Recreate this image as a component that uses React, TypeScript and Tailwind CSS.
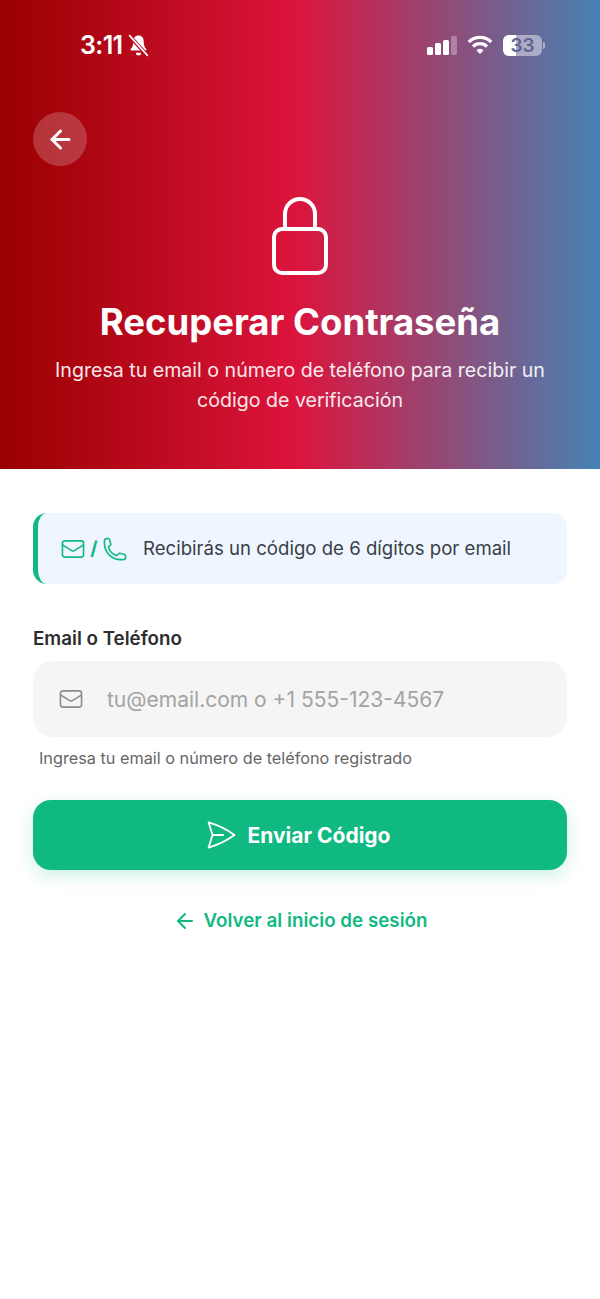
import React from 'react';
import { ArrowLeft } from 'lucide-react';

const MAIL_PATH =
  'M21.75 6.75v10.5a2.25 2.25 0 0 1-2.25 2.25h-15a2.25 2.25 0 0 1-2.25-2.25V6.75m19.5 0A2.25 2.25 0 0 0 19.5 4.5h-15a2.25 2.25 0 0 0-2.25 2.25m19.5 0v.243a2.25 2.25 0 0 1-1.07 1.916l-7.5 4.615a2.25 2.25 0 0 1-2.36 0L3.32 8.91a2.25 2.25 0 0 1-1.07-1.916V6.75';
const PHONE_PATH =
  'M2.25 6.75c0 8.284 6.716 15 15 15h2.25a2.25 2.25 0 0 0 2.25-2.25v-1.372c0-.516-.351-.966-.852-1.091l-4.423-1.106c-.44-.11-.902.055-1.173.417l-.97 1.293c-.282.376-.769.542-1.21.38a12.035 12.035 0 0 1-7.143-7.143c-.162-.441.004-.928.38-1.21l1.293-.97c.363-.271.527-.734.417-1.173L6.963 3.102a1.125 1.125 0 0 0-1.091-.852H4.5A2.25 2.25 0 0 0 2.25 4.5v2.25Z';
const SEND_PATH =
  'M6 12 3.269 3.125A59.769 59.769 0 0 1 21.485 12 59.768 59.768 0 0 1 3.27 20.875L5.999 12Zm0 0h7.5';

function OutlineIcon({ d, className, strokeWidth = 1.5 }: { d: string; className: string; strokeWidth?: number }) {
  return (
    <svg viewBox="0 0 24 24" fill="none" stroke="currentColor" strokeWidth={strokeWidth} strokeLinecap="round" strokeLinejoin="round" className={className}>
      <path d={d} />
    </svg>
  );
}

function StatusBar() {
  return (
    <div className="h-[28px] flex items-center justify-between pl-[80px] pr-[55px] text-white">
      <div className="flex items-center gap-[5px]">
        <span className="text-[25px] leading-none font-semibold tracking-tight">3:11</span>
        {/* Muted bell */}
        <svg viewBox="0 0 20 22" className="w-[21px] h-[23px]" fill="white">
          <path d="M10 1.500c-3.200 0-5 2.600-5 5.600 0 3.600-.9 5.800-2.400 7.300-.5.6-.2 1.400.6 1.400h13.600c.8 0 1.100-.8.6-1.400-1.500-1.500-2.400-3.700-2.400-7.300 0-3-1.800-5.600-5-5.600Z" />
          <path d="M7.500 18h5a2.500 2.500 0 0 1-5 0Z" />
          <path d="M2 2.500 18 20" stroke="#bb0c29" strokeWidth="3.600" />
          <path d="M1.500 1.500 18.500 20.500" stroke="white" strokeWidth="1.600" strokeLinecap="round" />
        </svg>
      </div>
      <div className="flex items-center gap-[10px]">
        {/* Signal */}
        <div className="flex items-end gap-[2px] h-[19px]">
          <div className="w-[6px] h-[8px] rounded-[1.5px] bg-white" />
          <div className="w-[6px] h-[12px] rounded-[1.5px] bg-white" />
          <div className="w-[6px] h-[15px] rounded-[1.5px] bg-white" />
          <div className="w-[6px] h-[19px] rounded-[1.5px] bg-white/30" />
        </div>
        {/* Wifi */}
        <svg viewBox="0 0 26 20" className="w-[26px] h-[20px]" fill="none" stroke="white" strokeWidth="3.200">
          <path d="M1.800 7a16 16 0 0 1 22.400 0" />
          <path d="M6 11.500a10 10 0 0 1 14 0" />
          <path d="M13 19l-3.600-3.800a5 5 0 0 1 7.200 0L13 19Z" fill="white" stroke="none" />
        </svg>
        {/* Battery */}
        <div className="flex items-center gap-[1px]">
          <div className="relative w-[39px] h-[21px] rounded-[6px] bg-white/45 overflow-hidden flex items-center justify-center">
            <div className="absolute inset-y-0 left-0 w-[13px] bg-white" />
            <span className="relative text-[19px] leading-none font-semibold text-[#5b6690]">33</span>
          </div>
          <div className="w-[2px] h-[7px] rounded-r-full bg-white/50" />
        </div>
      </div>
    </div>
  );
}

export default function App() {
  return (
    <div className="min-h-[1299px] bg-white font-['Inter',sans-serif]">
      {/* Header */}
      <div className="h-[469px] pt-[31px] flex flex-col bg-[linear-gradient(90deg,#990000_0%,#dc143c_49%,#4682b4_100%)]">
        <StatusBar />

        <button className="mt-[53px] ml-[33px] w-[54px] h-[54px] rounded-full bg-white/20 flex items-center justify-center text-white">
          <ArrowLeft className="w-[29px] h-[29px]" strokeWidth={2.5} />
        </button>

        <div className="flex flex-col items-center text-white">
          <svg viewBox="0 0 60 78" className="mt-[31px] w-[60px] h-[78px]" fill="none" stroke="white" strokeWidth="4">
            <rect x="4" y="32" width="52" height="44" rx="8" />
            <path d="M15 32V17a15 15 0 0 1 30 0v15" />
          </svg>
          <h1 className="mt-[23px] text-[36.5px] leading-[48px] font-bold">Recuperar Contraseña</h1>
          <p className="mt-[9px] w-[520px] text-center text-[19.6px] leading-[30px] text-white/90">
            Ingresa tu email o número de teléfono para recibir un código de verificación
          </p>
        </div>
      </div>

      {/* Form */}
      <div className="px-[33px] pt-[44px]">
        <div className="h-[71px] rounded-[14px] border-l-[5px] border-[#10b981] bg-[#eff6ff] flex items-center pl-[22px]">
          <div className="flex items-center text-[#10b981]">
            <OutlineIcon d={MAIL_PATH} className="w-[26px] h-[26px]" />
            <span className="ml-[4px] mr-[4px] w-[8px] text-center text-[19px] leading-none font-bold">/</span>
            <OutlineIcon d={PHONE_PATH} className="w-[26px] h-[26px]" />
          </div>
          <span className="ml-[15px] pt-[1px] text-[18.6px] text-[#3a3f47]">Recibirás un código de 6 dígitos por email</span>
        </div>

        <label className="block mt-[43px] text-[18.75px] leading-[24px] font-semibold text-[#2d2d2d]">Email o Teléfono</label>
        <div className="mt-[10px] h-[76px] rounded-[20px] bg-[#f5f5f5] flex items-center pl-[25px]">
          <OutlineIcon d={MAIL_PATH} className="w-[26px] h-[26px] text-[#8c8c8c]" />
          <span className="ml-[23px] pt-[1px] text-[21px] text-[#a3a3a3]">tu@email.com o +1 555-123-4567</span>
        </div>
        <p className="mt-[10px] ml-[6px] text-[16.25px] leading-[22px] text-[#666666]">Ingresa tu email o número de teléfono registrado</p>

        <button className="mt-[31px] w-full h-[70px] rounded-[18px] bg-[#10b981] shadow-[0_6px_18px_rgba(16,185,129,0.2)] flex items-center justify-center gap-[10px] pr-[6px] text-white">
          <OutlineIcon d={SEND_PATH} className="w-[34px] h-[34px]" strokeWidth={1.3} />
          <span className="pt-[1px] text-[21px] font-bold">Enviar Código</span>
        </button>

        <div className="mt-[39px] flex items-center justify-center gap-[7px] text-[#10b981]">
          <ArrowLeft className="w-[24px] h-[24px]" strokeWidth={2} />
          <span className="text-[18.8px] leading-[24px] font-semibold">Volver al inicio de sesión</span>
        </div>
      </div>
    </div>
  );
}
